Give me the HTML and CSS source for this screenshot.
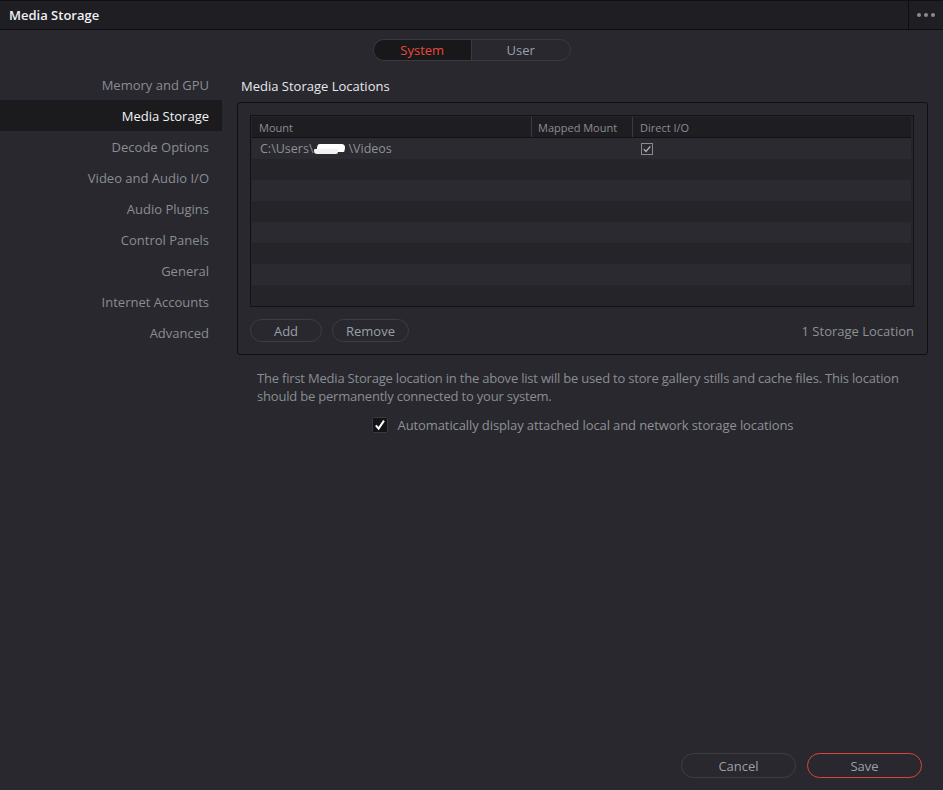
FILE: index.html
```html
<!DOCTYPE html>
<html>
<head>
<meta charset="utf-8">
<link rel="stylesheet" href="styles.css">
</head>
<body>
<div class="window">
  <header class="titlebar">
    <div class="title">Media Storage</div>
    <div class="more"><span></span><span></span><span></span></div>
  </header>

  <div class="tabs-wrap">
    <div class="tabs">
      <div class="tab active">System</div>
      <div class="tab">User</div>
    </div>
  </div>

  <div class="main">
    <nav class="sidebar">
      <div class="nav-item">Memory and GPU</div>
      <div class="nav-item selected">Media Storage</div>
      <div class="nav-item">Decode Options</div>
      <div class="nav-item">Video and Audio I/O</div>
      <div class="nav-item">Audio Plugins</div>
      <div class="nav-item">Control Panels</div>
      <div class="nav-item">General</div>
      <div class="nav-item">Internet Accounts</div>
      <div class="nav-item">Advanced</div>
    </nav>

    <section class="content">
      <h2 class="section-title">Media Storage Locations</h2>
      <div class="panel">
        <div class="table">
          <div class="thead">
            <div class="th col-mount">Mount</div>
            <div class="th col-mapped">Mapped Mount</div>
            <div class="th col-direct">Direct I/O</div>
          </div>
          <div class="row">
            <div class="td col-mount">C:\Users\<span class="redact"><span class="r1"></span><span class="r2"></span></span>\Videos</div>
            <div class="td col-mapped"></div>
            <div class="td col-direct">
              <span class="mini-check">
                <svg viewBox="0 0 12 12" width="12" height="12"><rect x="0.5" y="0.5" width="11" height="11" fill="none" stroke="#8a8a8e"/><path d="M2.8 6.2 L5 8.4 L9.3 3.4" fill="none" stroke="#b0b0b4" stroke-width="1.4"/></svg>
              </span>
            </div>
          </div>
          <div class="row"></div>
          <div class="row"></div>
          <div class="row"></div>
          <div class="row"></div>
          <div class="row"></div>
          <div class="row"></div>
          <div class="row last"></div>
        </div>
        <div class="panel-footer">
          <div class="btn-group">
            <button class="pill btn-add">Add</button>
            <button class="pill btn-remove">Remove</button>
          </div>
          <div class="count">1 Storage Location</div>
        </div>
      </div>

      <p class="note">The first Media Storage location in the above list will be used to store gallery stills and cache files. This location should be permanently connected to your system.</p>

      <div class="auto-row">
        <span class="checkbox">
          <svg viewBox="0 0 16 16" width="16" height="16"><rect x="0.5" y="0.5" width="15" height="15" rx="1" fill="#141416" stroke="#3a3a3e"/><path d="M3.8 8.4 L6.6 11.6 L12 3.6" fill="none" stroke="#ffffff" stroke-width="2"/></svg>
        </span>
        <span class="auto-label">Automatically display attached local and network storage locations</span>
      </div>
    </section>
  </div>

  <footer class="footer">
    <button class="pill big">Cancel</button>
    <button class="pill big save">Save</button>
  </footer>
</div>
</body>
</html>
```

FILE: styles.css
```css
* { box-sizing: border-box; }
html, body {
  margin: 0;
  padding: 0;
  background: #28282e;
}
body {
  font-family: "Open Sans", "DejaVu Sans", sans-serif;
  font-size: 13px;
  color: #8e8e92;
}
.window {
  width: 943px;
  height: 790px;
  display: flex;
  flex-direction: column;
  background: #28282e;
}

/* title bar */
.titlebar {
  height: 30px;
  flex: none;
  display: flex;
  align-items: stretch;
  background: #1f1f23;
  border-top: 1px solid #101012;
  border-bottom: 1px solid #0e0e10;
}
.title {
  flex: 1;
  padding-left: 9px;
  display: flex;
  align-items: center;
  font-weight: 600;
  color: #eef0f4;
  font-size: 13px;
}
.more {
  width: 35px;
  border-left: 1px solid #0e0e10;
  display: flex;
  align-items: center;
  justify-content: center;
  gap: 3px;
}
.more span {
  width: 4px;
  height: 4px;
  border-radius: 50%;
  background: #8a8a8e;
}

/* tabs */
.tabs-wrap {
  flex: none;
  display: flex;
  justify-content: center;
  padding-top: 9px;
}
.tabs {
  display: flex;
  width: 198px;
  height: 22px;
  border: 1px solid #3a3a40;
  border-radius: 11px;
  overflow: hidden;
}
.tab {
  flex: 1;
  display: flex;
  align-items: center;
  justify-content: center;
  color: #9aa0a8;
  font-size: 13px;
}
.tab.active {
  background: #18181b;
  color: #e8493c;
  border-right: 1px solid #3a3a40;
}

/* main */
.main {
  flex: 1;
  display: flex;
  padding-top: 8px;
}
.sidebar {
  width: 222px;
  flex: none;
  display: flex;
  flex-direction: column;
}
.nav-item {
  height: 31px;
  display: flex;
  align-items: center;
  justify-content: flex-end;
  padding-right: 13px;
  color: #8a8d92;
}
.nav-item.selected {
  background: #1b1b1e;
  color: #f2f3f5;
}

.content {
  flex: 1;
  padding-top: 1px;
  padding-left: 15px;
  padding-right: 15px;
}
.section-title {
  margin: 0;
  height: 32px;
  display: flex;
  align-items: center;
  padding-left: 4px;
  font-size: 13px;
  font-weight: 400;
  color: #e6e8ec;
}
.panel {
  border: 1px solid #0f0f11;
  border-radius: 3px;
  padding: 12px 13px 12px 12px;
}
.table {
  border: 1px solid #131316;
  padding: 1px 2px 0 1px;
  background: #242429;
}
.thead {
  display: flex;
  height: 21px;
  background: #1e1e22;
  border-bottom: 1px solid #111113;
}
.th {
  display: flex;
  align-items: center;
  padding-left: 7px;
  font-size: 11px;
  color: #8a8d92;
}
.col-mount { width: 279px; }
.col-mapped { width: 101px; }
.col-direct { flex: 1; }
.th + .th { border-left: 1px solid #3a3a3f; }
.th.col-mapped { padding-left: 6px; }
.row {
  display: flex;
  height: 21px;
}
.row:nth-child(even) { background: #2a2a30; }
.row:nth-child(odd) { background: #242429; }
.row.last { height: 21px; }
.td {
  display: flex;
  align-items: center;
  padding-left: 8px;
  font-size: 12.5px;
  color: #8e9196;
}
.td.col-direct { padding-left: 9px; }
.redact {
  position: relative;
  display: inline-block;
  width: 33px;
  height: 13px;
  margin: 0 1px;
}
.redact .r1 {
  position: absolute;
  left: 3px; top: 2px;
  width: 28px; height: 8px;
  background: #ffffff;
  border-radius: 2px 4px 1px 3px;
  transform: skewX(-10deg);
}
.redact .r2 {
  position: absolute;
  left: 0; top: 7px;
  width: 24px; height: 5px;
  background: #f2f2f2;
  border-radius: 1px 2px 2px 3px;
}
.mini-check { display: flex; }

.panel-footer {
  display: flex;
  align-items: center;
  justify-content: space-between;
  margin-top: 12px;
}
.btn-group { display: flex; gap: 10px; }
.pill {
  font-family: inherit;
  font-size: 13px;
  color: #9aa0a8;
  background: transparent;
  border: 1px solid #3d3d43;
  border-radius: 12px;
  height: 23px;
  padding: 0;
  display: flex;
  align-items: center;
  justify-content: center;
}
.btn-add { width: 72px; }
.btn-remove { width: 77px; }
.count { color: #8e9196; }

.note {
  margin: 14px 0 0 0;
  padding-left: 20px;
  padding-right: 7px;
  line-height: 18px;
  font-size: 13px;
  letter-spacing: -0.2px;
  color: #8a8d92;
}
.auto-row {
  display: flex;
  align-items: center;
  justify-content: center;
  gap: 10px;
  margin-top: 11px;
}
.checkbox { display: flex; }
.auto-label {
  font-size: 13px;
  letter-spacing: -0.1px;
  color: #8e9196;
}

.footer {
  flex: none;
  display: flex;
  justify-content: flex-end;
  gap: 11px;
  padding: 0 21px 12px 0;
}
.pill.big {
  width: 115px;
  height: 25px;
  border-radius: 13px;
}
.pill.save { border-color: #d8453a; }
```
